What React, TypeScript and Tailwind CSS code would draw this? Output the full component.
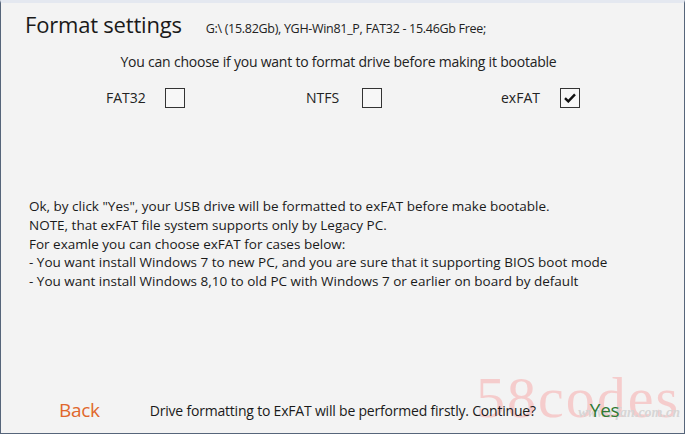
import type { FC } from "react";

const Box: FC<{ checked?: boolean }> = ({ checked }) => (
  <div className="w-[20px] h-[20px] border border-[#333] bg-[#f7f7f7] flex items-center justify-center">
    {checked && (
      <svg width="12" height="10" viewBox="0 0 12 10">
        <path d="M1 5.2 L4.3 8.4 L11 1.4" fill="none" stroke="#111" strokeWidth="2.4" />
      </svg>
    )}
  </div>
);

const Option: FC<{ label: string; checked?: boolean; w: string }> = ({ label, checked, w }) => (
  <div className={`flex items-center ${w}`}>
    <span className="text-[14px] text-[#222]">{label}</span>
    <div className="ml-auto">
      <Box checked={checked} />
    </div>
  </div>
);

const notes = [
  'Ok, by click "Yes", your USB drive will be formatted to exFAT before make bootable.',
  "NOTE, that exFAT file system supports only by Legacy PC.",
  "For examle you can choose exFAT for cases below:",
  "- You want install Windows 7 to new PC, and you are sure that it supporting BIOS boot mode",
  "- You want install Windows 8,10 to old PC with Windows 7 or earlier on board by default",
];

export default function App() {
  return (
    <div
      className="relative w-[685px] h-[434px] overflow-hidden bg-[#f3f3f3] border-x border-b border-[#56657a] border-t-[3px] border-t-[#e4e8f0] flex flex-col"
      style={{ fontFamily: '"Open Sans", "Noto Sans", sans-serif' }}
    >
      {/* watermark, behind the content */}
      <div className="absolute right-[4px] bottom-[6px] pointer-events-none select-none">
        <div
          className="text-[58px] leading-[58px] text-[#f5cccc] tracking-[2px]"
          style={{ fontFamily: '"Liberation Serif", serif' }}
        >
          58codes
        </div>
        <div
          className="absolute right-[0px] bottom-[4px] text-[14px] italic font-bold text-[#d6d6d6]"
          style={{ fontFamily: '"Liberation Serif", serif' }}
        >
          www.cfan.com.cn
        </div>
      </div>

      <div className="relative flex items-baseline pl-[24px] pt-[6px]">
        <h1 className="text-[22px] leading-[30px] text-[#1a1a1a] tracking-[-0.2px]">Format settings</h1>
        <span className="ml-[24px] text-[12.5px] text-[#222] tracking-[-0.3px]">
          G:\ (15.82Gb), YGH-Win81_P, FAT32 - 15.46Gb Free;
        </span>
      </div>

      <p className="relative mt-[12px] pr-[8px] text-center text-[14px] text-[#222] tracking-[-0.22px]">
        You can choose if you want to format drive before making it bootable
      </p>

      <div className="relative flex pl-[105px] mt-[15px]">
        <Option label="FAT32" w="w-[79px]" />
        <div className="ml-[121px]">
          <Option label="NTFS" w="w-[76px]" />
        </div>
        <div className="ml-[119px]">
          <Option label="exFAT" checked w="w-[79px]" />
        </div>
      </div>

      <div className="relative mt-[89px] pl-[28px] text-[13.5px] leading-[18.8px] text-[#1a1a1a]">
        {notes.map((n) => (
          <div key={n}>{n}</div>
        ))}
      </div>

      <div className="relative mt-auto mb-[8px] flex items-center h-[30px]">
        <span className="ml-[58px] text-[19px] text-[#e0672c] tracking-[-0.3px]">Back</span>
        <span className="ml-[50px] text-[14px] text-[#1a1a1a] tracking-[-0.2px]">
          Drive formatting to ExFAT will be performed firstly. Continue?
        </span>
        <span className="ml-[54px] text-[19px] text-[#2f7a33] tracking-[-0.3px]">Yes</span>
      </div>
    </div>
  );
}
